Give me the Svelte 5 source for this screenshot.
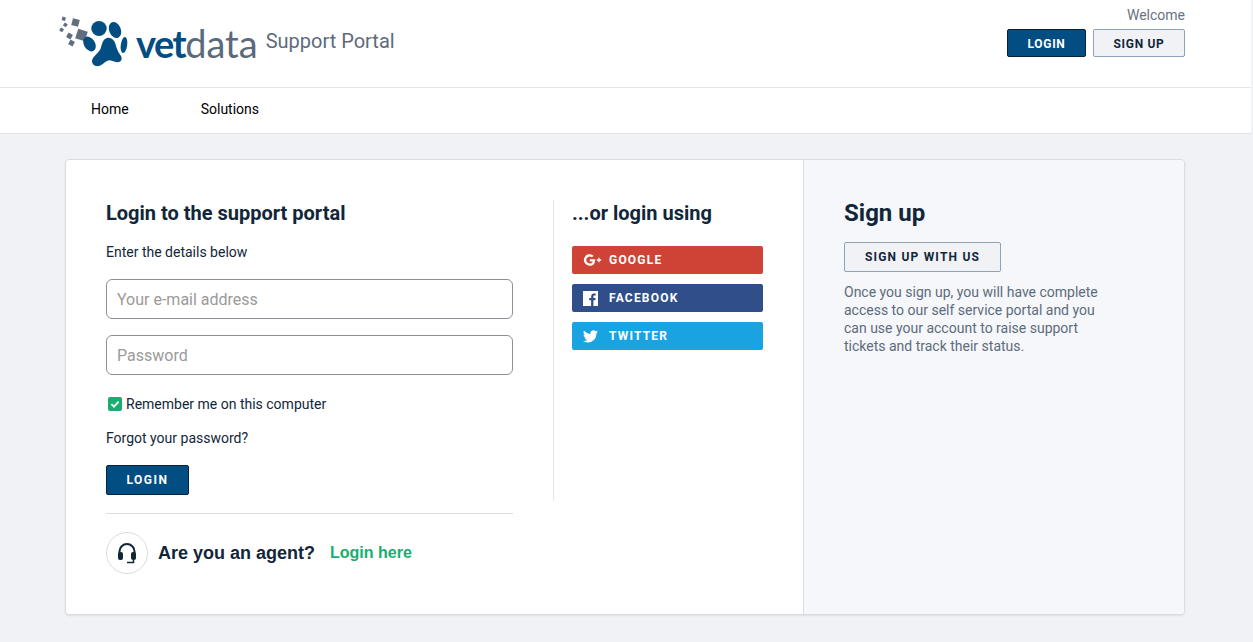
<script lang="ts">
	const providers = [
		{ name: 'GOOGLE', cls: 'google' },
		{ name: 'FACEBOOK', cls: 'facebook' },
		{ name: 'TWITTER', cls: 'twitter' }
	];
</script>

<header class="top">
	<a class="brand" href="#home">
		<svg class="paw" viewBox="58 14 76 56" width="76" height="56" aria-hidden="true">
			<g fill="#626d7e">
				<rect x="76.500" y="30" width="10" height="10" transform="rotate(18 81.500 35)" />
				<rect x="72" y="19" width="7" height="7" transform="rotate(15 75.500 22.500)" />
				<rect x="62" y="17" width="3.500" height="3.500" transform="rotate(15 63.700 18.700)" />
				<rect x="63.500" y="23" width="3.500" height="3.500" transform="rotate(30 65 25)" />
				<rect x="60" y="28" width="3.500" height="3.500" transform="rotate(30 61.500 29.500)" />
				<rect x="67" y="33.500" width="5" height="5" transform="rotate(30 69.500 36)" />
				<rect x="69" y="40.500" width="5" height="5" transform="rotate(30 71.500 43)" />
			</g>
			<g fill="#024d81">
				<ellipse cx="99" cy="28.500" rx="7.700" ry="7.500" />
				<ellipse cx="115" cy="30" rx="5.800" ry="8.300" transform="rotate(-22 115 30)" />
				<ellipse cx="89.500" cy="44" rx="5.500" ry="8" transform="rotate(-32 89.500 44)" />
				<ellipse cx="124" cy="45" rx="3.200" ry="8" transform="rotate(8 124 45)" />
				<path d="M107 38c5-1 8 3 9 8 1 4 3 7 5 10 2 4-1 7-5 6-4-1-6-3-9-1-4 2-6 6-11 5-4-1-5-5-3-8 2-3 5-5 7-8 2-4 2-11 7-12z" />
			</g>
		</svg>
		<span class="wordmark"><b>vet</b><span class="data">data</span></span>
		<span class="portal">Support Portal</span>
	</a>
	<div class="account">
		<span class="welcome">Welcome</span>
		<div class="account-btns">
			<button class="btn primary small">LOGIN</button>
			<button class="btn outline small signup">SIGN UP</button>
		</div>
	</div>
</header>

<nav class="nav">
	<a href="#home">Home</a>
	<a href="#solutions">Solutions</a>
</nav>

<main class="page">
	<section class="card">
		<div class="left">
			<div class="columns">
				<div class="form">
					<h2>Login to the support portal</h2>
					<p class="hint">Enter the details below</p>
					<input type="text" placeholder="Your e-mail address" />
					<input type="password" placeholder="Password" />
					<label class="remember">
						<span class="check">
							<svg viewBox="0 0 14 14" width="14" height="14" aria-hidden="true">
								<path d="M3.400 7.200l2.600 2.500 4.600-5" fill="none" stroke="#fff" stroke-width="1.800" />
							</svg>
						</span>
						Remember me on this computer
					</label>
					<a class="forgot" href="#forgot">Forgot your password?</a>
					<button class="btn primary login">LOGIN</button>
				</div>
				<div class="social">
					<h2>...or login using</h2>
					{#each providers as p}
						<button class="social-btn {p.cls}">
							<span class="ico">
								{#if p.cls === 'google'}
									<svg viewBox="0 0 20 14" width="20" height="14" aria-hidden="true">
										<path d="M12.200 6.200H6.800v2.200h3c-.4 1.400-1.500 2.100-3 2.100a3.500 3.500 0 1 1 2.200-6.200l1.600-1.600A5.800 5.800 0 1 0 6.800 12.800c3.400 0 5.600-2.400 5.400-6.600z" fill="#fff" />
										<path d="M16 4.800v4.400M13.800 7h4.400" stroke="#fff" stroke-width="1.300" fill="none" />
									</svg>
								{:else if p.cls === 'facebook'}
									<svg viewBox="0 0 15 15" width="15" height="15" aria-hidden="true">
										<path d="M0 0h15v15h-4.600V9.300h1.900l.3-2.200h-2.200V5.700c0-.6.200-1.100 1.100-1.100h1.200V2.600c-.2 0-.9-.1-1.700-.1-1.700 0-2.800 1-2.800 2.900v1.700H6.200v2.200h1.900V15H0z" fill="#fff" />
									</svg>
								{:else}
									<svg viewBox="0 0 24 20" width="15" height="13" aria-hidden="true">
										<path d="M24 2.400c-.9.400-1.800.7-2.800.8 1-.6 1.800-1.600 2.200-2.700-1 .6-2 1-3.100 1.200A4.900 4.900 0 0 0 11.900 6.200 14 14 0 0 1 1.700.9a4.900 4.900 0 0 0 1.500 6.600c-.8 0-1.600-.2-2.200-.6v.1c0 2.400 1.700 4.400 3.900 4.800-.7.200-1.500.2-2.200.1.600 2 2.400 3.400 4.600 3.400A9.900 9.900 0 0 1 0 17.300 14 14 0 0 0 7.500 19.500c9.100 0 14.300-7.700 14-14.600 1-.7 1.800-1.500 2.500-2.500z" fill="#fff" />
									</svg>
								{/if}
							</span>
							{p.name}
						</button>
					{/each}
				</div>
			</div>
			<div class="agent">
				<span class="headset">
					<svg viewBox="0 0 20 22" width="20" height="22" aria-hidden="true">
						<path d="M2.500 13V9.500a7.500 7.500 0 0 1 15 0V13" fill="none" stroke="#12263a" stroke-width="2" />
						<rect x="1" y="10" width="5" height="8" rx="2" fill="#12263a" />
						<rect x="14" y="10" width="5" height="8" rx="2" fill="#12263a" />
						<path d="M16.500 18v2.500H10" fill="none" stroke="#12263a" stroke-width="1.500" />
					</svg>
				</span>
				<strong>Are you an agent?</strong>
				<a href="#agent">Login here</a>
			</div>
		</div>
		<aside class="right">
			<h2 class="signup-title">Sign up</h2>
			<button class="btn outline join">SIGN UP WITH US</button>
			<p>Once you sign up, you will have complete access to our self service portal and you can use your account to raise support tickets and track their status.</p>
		</aside>
	</section>
</main>

<style>
	:global(body) {
		margin: 0;
		background: #f0f2f6;
		font-family: Roboto, 'Liberation Sans', sans-serif;
		color: #12263a;
	}
	.top {
		height: 87px;
		background: #fff;
		border-bottom: 1px solid #e4e6ea;
		display: flex;
		justify-content: space-between;
		padding: 0 66px 0 59px;
		margin-right: 2px;
	}
	.brand {
		display: flex;
		align-items: flex-start;
		text-decoration: none;
		padding-top: 14px;
	}
	.paw {
		display: block;
		margin-left: -1px;
	}
	.wordmark {
		font-family: Lato, 'Liberation Sans', sans-serif;
		font-size: 38px;
		line-height: 46px;
		letter-spacing: -1.500px;
		margin: 6px 0 0 2px;
	}
	.wordmark b {
		color: #024d81;
		font-weight: 700;
	}
	.data {
		color: #5a697b;
		font-weight: 400;
		letter-spacing: 0;
	}
	.portal {
		font-size: 20px;
		color: #5d6b7c;
		line-height: 24px;
		margin: 15px 0 0 8px;
	}
	.account {
		display: flex;
		flex-direction: column;
		align-items: flex-end;
		padding-top: 7px;
	}
	.welcome {
		font-size: 14px;
		line-height: 16px;
		color: #68737f;
	}
	.account-btns {
		display: flex;
		gap: 7px;
		margin-top: 6px;
	}
	.btn {
		font-family: Roboto, sans-serif;
		font-weight: 700;
		border-radius: 2px;
		letter-spacing: 1px;
		cursor: pointer;
		box-sizing: border-box;
		padding: 0;
	}
	.primary {
		background: #024d81;
		border: 1px solid #04233c;
		color: #fff;
	}
	.outline {
		background: #f0f2f6;
		border: 1px solid #8fa3b8;
		color: #12263a;
	}
	.small {
		width: 79px;
		height: 28px;
		font-size: 12px;
		letter-spacing: 0.7px;
		padding-top: 1px;
	}
	.signup {
		width: 92px;
	}
	.nav {
		height: 41px;
		padding: 0 0 4px 91px;
		margin-right: 2px;
		background: #fff;
		border-bottom: 1px solid #dfe1e5;
		display: flex;
		align-items: center;
		gap: 72px;
		font-size: 14px;
	}
	.nav a {
		color: #000;
		text-decoration: none;
	}
	.page {
		padding: 25px 68px 27px 65px;
	}
	.card {
		display: flex;
		height: 456px;
		box-sizing: border-box;
		background: #fff;
		border: 1px solid #d9dce1;
		border-radius: 4px;
		box-shadow: 0 1px 2px rgba(0, 0, 0, 0.08);
		overflow: hidden;
	}
	.left {
		width: 738px;
		box-sizing: border-box;
		padding: 40px 40px 0;
		border-right: 1px solid #d9dce1;
	}
	.columns {
		display: flex;
		height: 301px;
	}
	h2 {
		font-size: 20px;
		line-height: 26px;
		font-weight: 700;
		margin: 0;
		color: #12263a;
	}
	.form {
		width: 407px;
		display: flex;
		flex-direction: column;
		align-items: flex-start;
		padding-right: 40px;
		border-right: 1px solid #e4e6ea;
		margin-right: 18px;
		flex: none;
	}
	.hint {
		font-size: 14px;
		line-height: 16px;
		margin: 18px 0 19px;
	}
	input {
		width: 100%;
		height: 40px;
		box-sizing: border-box;
		border: 1px solid #8a919a;
		border-radius: 6px;
		padding: 0 10px;
		font: 16px Roboto, sans-serif;
		margin-bottom: 16px;
		background: #fff;
	}
	input::placeholder {
		color: #9a9a9a;
		opacity: 1;
	}
	.remember {
		display: flex;
		align-items: center;
		gap: 4px;
		font-size: 14px;
		line-height: 16px;
		margin: 5px 0 0 2px;
	}
	.check {
		width: 14px;
		height: 14px;
		border-radius: 2px;
		background: #19ad6f;
		display: block;
	}
	.check svg {
		display: block;
	}
	.forgot {
		font-size: 14px;
		line-height: 16px;
		color: #12263a;
		text-decoration: none;
		margin-top: 18px;
	}
	.login {
		width: 83px;
		height: 30px;
		font-size: 12px;
		margin-top: 19px;
		letter-spacing: 1.500px;
	}
	.social {
		width: 191px;
	}
	.social h2 {
		margin-bottom: 20px;
	}
	.social-btn {
		display: flex;
		align-items: center;
		width: 100%;
		height: 28px;
		border: 0;
		border-radius: 2px;
		margin-bottom: 10px;
		padding: 0 0 0 11px;
		color: #fff;
		font: 700 12px Roboto, sans-serif;
		letter-spacing: 1.200px;
	}
	.ico {
		width: 26px;
		display: flex;
		align-items: center;
	}
	.google {
		background: #cf4236;
	}
	.facebook {
		background: #304f8a;
	}
	.twitter {
		background: #19a3e1;
	}
	.agent {
		width: 407px;
		margin-top: 12px;
		border-top: 1px solid #d9dce1;
		padding-top: 18px;
		display: flex;
		align-items: center;
		font-family: 'Liberation Sans', Arial, sans-serif;
		font-weight: 700;
	}
	.headset {
		width: 42px;
		height: 42px;
		box-sizing: border-box;
		border: 1px solid #d9dce1;
		border-radius: 50%;
		display: flex;
		align-items: center;
		justify-content: center;
		margin-right: 10px;
	}
	.agent strong {
		font-size: 18px;
	}
	.agent a {
		color: #19ad6f;
		font-size: 16px;
		text-decoration: none;
		margin-left: 15px;
	}
	.right {
		flex: 1;
		background: #f5f7fa;
		padding: 40px 40px 0;
		box-sizing: border-box;
	}
	.signup-title {
		font-size: 24px;
	}
	.join {
		display: block;
		width: 157px;
		height: 30px;
		margin-top: 16px;
		font-size: 12px;
		letter-spacing: 1.200px;
	}
	.right p {
		margin: 11px 0 0;
		width: 270px;
		font-size: 14px;
		line-height: 18px;
		color: #5d6b7c;
	}
</style>
